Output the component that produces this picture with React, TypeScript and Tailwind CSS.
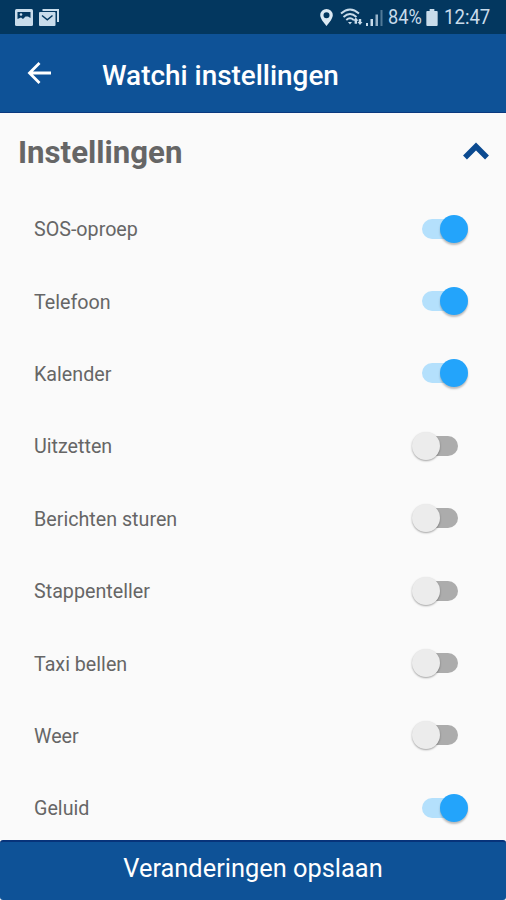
import clsx from "clsx";

const settings = [
  { label: "SOS-oproep", enabled: true },
  { label: "Telefoon", enabled: true },
  { label: "Kalender", enabled: true },
  { label: "Uitzetten", enabled: false },
  { label: "Berichten sturen", enabled: false },
  { label: "Stappenteller", enabled: false },
  { label: "Taxi bellen", enabled: false },
  { label: "Weer", enabled: false },
  { label: "Geluid", enabled: true },
];

const StatusBar = () => {
  return (
    <div className="flex h-[34px] shrink-0 items-center bg-[#03375f] px-[15px] text-[#c9dceb]">
      {/* Picture notification */}
      <svg width="18" height="17" viewBox="0 0 18 17" fill="none">
        <rect width="18" height="17" rx="1.5" fill="#c9dceb" />
        <path d="M2.5 3h13v6L13 7.500h-2.500L8 10 6 8.500 2.500 10z" fill="#03375f" />
        <circle cx="6" cy="5.5" r="1.3" fill="#c9dceb" />
      </svg>
      {/* Mail notification */}
      <svg className="ml-[6px]" width="20" height="17" viewBox="0 0 20 17" fill="none">
        <path d="M3.5 1H19v12" stroke="#c9dceb" strokeWidth="2" />
        <rect y="3" width="16.5" height="14" rx="1" fill="#c9dceb" />
        <path d="M3 6.500l5.300 4.300 5.200-4.300" stroke="#03375f" strokeWidth="1.5" />
      </svg>
      <div className="ml-auto flex items-center">
        {/* Location */}
        <svg width="13" height="17" viewBox="0 0 13 17" fill="#dce9f3">
          <path
            fillRule="evenodd"
            d="M6.500 0A6.300 6.300 0 0 0 .2 6.300C.2 10.300 6.500 17 6.500 17s6.300-6.700 6.300-10.700A6.300 6.300 0 0 0 6.500 0zm0 3.300a3 3 0 1 1 0 6 3 3 0 0 1 0-6z"
          />
        </svg>
        {/* Wifi with transfer arrows */}
        <svg className="ml-[7px]" width="23" height="18" viewBox="0 0 23 18" fill="none" stroke="currentColor">
          <path d="M1 5.500Q10-2.500 19 5.500" strokeWidth="1.9" />
          <path d="M3.500 9Q10 3 16.500 9" strokeWidth="1.9" />
          <path d="M6.300 12Q10 8.500 13.700 12" strokeWidth="1.9" />
          <path d="M8 14h4l-2 2.500z" fill="currentColor" stroke="none" />
          <path d="M15.800 9.500l2.700 3.300h-1.500v3h-2.400v-3h-1.500z" fill="currentColor" stroke="none" />
          <path d="M20 17l-2.500-3h1.300v-3h2.400v3h1.300z" fill="currentColor" stroke="none" />
        </svg>
        {/* Signal */}
        <svg className="ml-[3px]" width="18" height="17" viewBox="0 0 18 17" fill="currentColor">
          <rect x="0" y="14" width="2" height="3" />
          <rect x="4.500" y="10" width="2.500" height="7" />
          <rect x="9.500" y="5.500" width="2.500" height="11.500" opacity=".75" />
          <rect x="14.500" y="1" width="2" height="16" opacity=".4" />
        </svg>
        <span className="ml-[4px] w-[36px] whitespace-nowrap text-[20px] leading-none">
          <span className="inline-block origin-left scale-x-[0.91]">84%</span>
        </span>
        {/* Battery */}
        <svg className="ml-[2px]" width="12" height="17" viewBox="0 0 12 18" fill="currentColor">
          <path d="M3.500 0h5v2H11a1 1 0 0 1 1 1v14a1 1 0 0 1-1 1H1a1 1 0 0 1-1-1V3a1 1 0 0 1 1-1h2.500z" />
        </svg>
        <span className="ml-[6px] w-[47px] whitespace-nowrap text-[20px] leading-none">
          <span className="inline-block origin-left scale-x-[0.93]">12:47</span>
        </span>
      </div>
    </div>
  );
};

const Toggle = ({ enabled }: { enabled: boolean }) => {
  return (
    <button
      type="button"
      role="switch"
      aria-checked={enabled}
      className={clsx("flex h-7 w-[46px] items-center", enabled ? "mr-[38px]" : "mr-[48px]")}
    >
      {enabled ? (
        <>
          <span className="h-5 w-6 shrink-0 rounded-l-full bg-[#b4e0fc]" />
          <span className="relative -ml-[6px] h-7 w-7 shrink-0 rounded-full bg-[#23a4fb] shadow-[0_2px_2px_rgba(0,0,0,0.25)]" />
        </>
      ) : (
        <>
          <span className="relative z-10 h-7 w-7 shrink-0 rounded-full bg-[#ececec] shadow-[0_1px_2px_rgba(0,0,0,0.35)]" />
          <span className="-ml-[6px] h-5 w-6 shrink-0 rounded-r-full bg-[#acacac]" />
        </>
      )}
    </button>
  );
};

const App = () => {
  return (
    <div className="flex h-[900px] w-[506px] flex-col overflow-hidden bg-[#fafafa] font-[Roboto,sans-serif]">
      <StatusBar />

      <header className="flex h-[79px] shrink-0 items-center border-b border-[#0a397f] bg-[#0e5297] pl-[27px] text-white">
        <svg width="25" height="22" viewBox="0 0 25 22" fill="none" stroke="white" strokeWidth="2.8">
          <path d="M24 11H3M12.500 1L2.500 11l10 10" />
        </svg>
        <h1 className="ml-[50px] mt-[6px] text-[27.9px] font-medium leading-8">Watchi instellingen</h1>
      </header>

      <main className="min-h-0 flex-1 overflow-hidden">
        <div className="flex h-[79.5px] items-center justify-between pl-[18px] pr-[17px]">
          <h2 className="text-[31.2px] font-bold leading-9 text-[#666]">Instellingen</h2>
          <svg className="mb-[4px]" width="26" height="18" viewBox="0 0 26 18" fill="none" stroke="#0b4a90" strokeWidth="5.5">
            <path d="M2 15.500L13 4.500l11 11" />
          </svg>
        </div>
        <ul>
          {settings.map((item) => (
            <li key={item.label} className="flex h-[72.4px] items-center justify-between pl-[34px]">
              <span className="pt-[2.5px] text-[19.7px] text-[#666]">{item.label}</span>
              <Toggle enabled={item.enabled} />
            </li>
          ))}
        </ul>
      </main>

      <button
        type="button"
        className="h-[60px] shrink-0 rounded-[3px] border-t-2 border-[#07337a] bg-[#0e5297] pb-[5px] text-[25.4px] text-white"
      >
        Veranderingen opslaan
      </button>
    </div>
  );
};

export default App;
